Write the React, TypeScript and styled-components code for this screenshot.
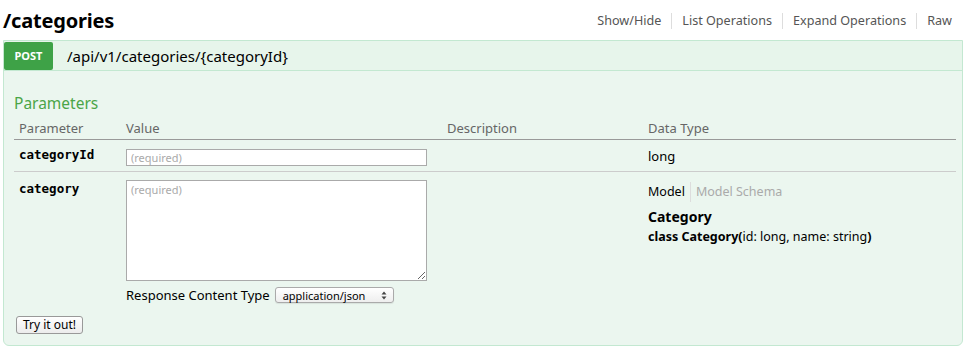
import React from "react";
import styled, { createGlobalStyle } from "styled-components";

const GlobalStyle = createGlobalStyle`
  html, body {
    margin: 0;
    padding: 0;
    background: #fff;
    font-family: "Noto Sans", "Open Sans", sans-serif;
    color: #333;
  }
`;

const Page = styled.div`
  width: 968px;
  height: 357px;
  padding: 0 5px 0 3px;
  box-sizing: border-box;
`;

const Resource = styled.div`
  display: flex;
  flex-direction: column;
`;

const Heading = styled.div`
  display: flex;
  align-items: center;
  justify-content: space-between;
  height: 40px;
`;

const Title = styled.h2`
  margin: 0;
  font-size: 20px;
  font-weight: 700;
  color: #000;
  letter-spacing: -0.2px;
`;

const Links = styled.ul`
  display: flex;
  list-style: none;
  margin: 0;
  padding: 2px 0 0;
`;

const LinkItem = styled.li<{ $last?: boolean }>`
  font-size: 12.6px;
  color: #555;
  padding: 0 10px;
  border-right: ${(p) => (p.$last ? "none" : "1px solid #ddd")};
  line-height: 16px;
  &:last-child {
    padding-right: 11px;
  }
`;

const Operation = styled.div`
  border: 1px solid #c3e8d1;
  border-radius: 0 0 6px 6px;
  background: #ebf6ef;
`;

const OpHeading = styled.div`
  display: flex;
  align-items: center;
  height: 29px;
  background: #e7f5eb;
  border-bottom: 1px solid #c3e8d1;
`;

const Method = styled.span`
  display: flex;
  align-items: center;
  justify-content: center;
  width: 49px;
  height: 28px;
  background: #3ea247;
  color: #fff;
  font-size: 11px;
  font-weight: 700;
  border-radius: 2px;
`;

const Path = styled.span`
  margin-left: 14px;
  font-size: 15px;
  color: #000;
`;

const OpBody = styled.div`
  padding: 21px 7px 11px 10px;
`;

const SectionTitle = styled.h4`
  margin: 0 0 2px 0;
  font-size: 15.5px;
  font-weight: 400;
  color: #4aa547;
`;

const Table = styled.table`
  width: 942px;
  table-layout: fixed;
  border-collapse: collapse;
  font-size: 13px;
  color: #000;
`;

const Th = styled.th<{ $w: number }>`
  box-sizing: border-box;
  width: ${(p) => p.$w}px;
  text-align: left;
  font-weight: 400;
  color: #666;
  font-size: 13px;
  padding: 3px 5px 2px;
  border-bottom: 1px solid #999;
`;

const Row = styled.tr<{ $last?: boolean }>`
  border-bottom: ${(p) => (p.$last ? "none" : "1px solid #ccc")};
`;

const Td = styled.td<{ $top?: number; $bottom?: number }>`
  vertical-align: top;
  padding: ${(p) => p.$top ?? 9}px 5px ${(p) => p.$bottom ?? 5}px;
`;

const Code = styled.code`
  font-family: "DejaVu Sans Mono", "Liberation Mono", monospace;
  font-weight: 700;
  font-size: 12.5px;
  color: #000;
  display: block;
`;

const TextInput = styled.input`
  display: block;
  width: 301px;
  height: 17px;
  box-sizing: border-box;
  border: 1px solid #aaa;
  font-family: "Noto Sans", sans-serif;
  font-size: 11px;
  padding: 1px 4px;
  background: #fff;
  &::placeholder {
    color: #aaa;
  }
`;

const TextArea = styled.textarea`
  display: block;
  width: 301px;
  height: 101px;
  box-sizing: border-box;
  border: 1px solid #aaa;
  font-family: "Noto Sans", sans-serif;
  font-size: 11px;
  padding: 1px 4px;
  margin-top: -1px;
  resize: both;
  background: #fff;
  &::placeholder {
    color: #aaa;
  }
`;

const ContentType = styled.div`
  display: flex;
  align-items: center;
  gap: 5px;
  margin-top: 5px;
  font-size: 13px;
  color: #000;
`;

const Select = styled.div`
  display: flex;
  align-items: center;
  justify-content: space-between;
  width: 119px;
  height: 16px;
  box-sizing: border-box;
  border: 1px solid #aaa;
  border-radius: 3px;
  padding: 0 6px 0 7px;
  font-size: 11px;
  background: linear-gradient(#fff, #eee);
  box-shadow: 0 1px 1px rgba(0, 0, 0, 0.08);
`;

const Value = styled.span`
  display: block;
`;

const SignatureTabs = styled.div`
  display: flex;
  align-items: center;
  margin-top: 1px;
  font-size: 12.5px;
`;

const Tab = styled.span<{ $active?: boolean }>`
  color: ${(p) => (p.$active ? "#000" : "#aaa")};
  padding: 0 5px;
  border-right: ${(p) => (p.$active ? "1px solid #ddd" : "none")};
  line-height: 20px;
  &:first-child {
    padding-left: 0;
  }
`;

const ModelName = styled.div`
  margin-top: 5px;
  font-weight: 700;
  font-size: 14px;
`;

const ModelSig = styled.div`
  margin-top: 2px;
  font-size: 12.5px;
  b {
    font-weight: 700;
  }
`;

const TryButton = styled.button`
  margin: 10px 0 0 2px;
  height: 18px;
  padding: 0 6px;
  font-family: "Noto Sans", sans-serif;
  font-size: 12px;
  color: #000;
  border: 1px solid #999;
  border-radius: 3px;
  background: linear-gradient(#fff, #ececec);
  line-height: 14px;
`;

function SelectArrows() {
  return (
    <svg width="6" height="9" viewBox="0 0 6 9">
      <path d="M3 0.5 L5.5 3.5 H0.5 Z" fill="#444" />
      <path d="M3 8.5 L5.5 5.5 H0.5 Z" fill="#444" />
    </svg>
  );
}

export default function App() {
  return (
    <Page>
      <GlobalStyle />
      <Resource>
        <Heading>
          <Title>/categories</Title>
          <Links>
            <LinkItem>Show/Hide</LinkItem>
            <LinkItem>List Operations</LinkItem>
            <LinkItem>Expand Operations</LinkItem>
            <LinkItem $last>Raw</LinkItem>
          </Links>
        </Heading>
        <Operation>
          <OpHeading>
            <Method>POST</Method>
            <Path>/api/v1/categories/{"{categoryId}"}</Path>
          </OpHeading>
          <OpBody>
            <SectionTitle>Parameters</SectionTitle>
            <Table>
              <thead>
                <tr>
                  <Th $w={107}>Parameter</Th>
                  <Th $w={321}>Value</Th>
                  <Th $w={201}>Description</Th>
                  <Th $w={313}>Data Type</Th>
                </tr>
              </thead>
              <tbody>
                <Row>
                  <Td $top={7}>
                    <Code>categoryId</Code>
                  </Td>
                  <Td>
                    <TextInput placeholder="(required)" />
                  </Td>
                  <Td />
                  <Td $top={7}>
                    <Value>long</Value>
                  </Td>
                </Row>
                <Row $last>
                  <Td $bottom={2}>
                    <Code>category</Code>
                  </Td>
                  <Td $bottom={2}>
                    <TextArea placeholder="(required)" />
                    <ContentType>
                      Response Content Type
                      <Select>
                        application/json
                        <SelectArrows />
                      </Select>
                    </ContentType>
                  </Td>
                  <Td $bottom={2} />
                  <Td $bottom={2}>
                    <SignatureTabs>
                      <Tab $active>Model</Tab>
                      <Tab>Model Schema</Tab>
                    </SignatureTabs>
                    <ModelName>Category</ModelName>
                    <ModelSig>
                      <b>class Category(</b>id: long, name: string<b>)</b>
                    </ModelSig>
                  </Td>
                </Row>
              </tbody>
            </Table>
            <TryButton>Try it out!</TryButton>
          </OpBody>
        </Operation>
      </Resource>
    </Page>
  );
}
